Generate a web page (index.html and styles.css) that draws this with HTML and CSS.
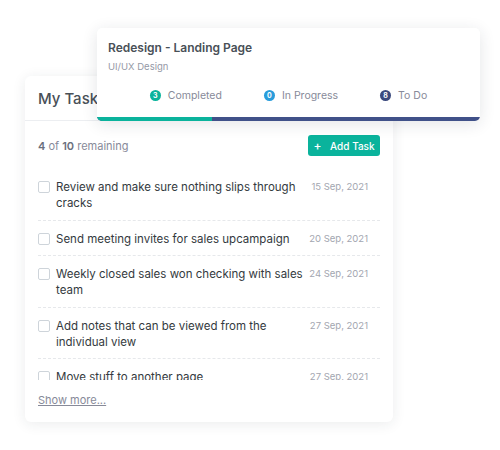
FILE: index.html
```html
<!DOCTYPE html>
<html lang="en">

<head>
    <meta charset="UTF-8">
    <meta name="viewport" content="width=device-width, initial-scale=1.0">
    <title>Tasks</title>
    <link rel="stylesheet" href="styles.css">
</head>

<body>
    <div class="scene">
        <div class="tasks-card">
            <div class="tasks-header">
                <h2>My Tasks</h2>
            </div>
            <div class="tasks-body">
                <div class="tasks-top">
                    <p class="remaining"><b>4</b> of <b>10</b> remaining</p>
                    <button class="add-btn"><span class="plus">+</span> Add Task</button>
                </div>
                <ul class="task-list">
                    <li class="task">
                        <span class="check"></span>
                        <span class="task-name">Review and make sure nothing slips through cracks</span>
                        <span class="task-date">15 Sep, 2021</span>
                    </li>
                    <li class="task">
                        <span class="check"></span>
                        <span class="task-name">Send meeting invites for sales upcampaign</span>
                        <span class="task-date">20 Sep, 2021</span>
                    </li>
                    <li class="task">
                        <span class="check"></span>
                        <span class="task-name">Weekly closed sales won checking with sales team</span>
                        <span class="task-date">24 Sep, 2021</span>
                    </li>
                    <li class="task">
                        <span class="check"></span>
                        <span class="task-name">Add notes that can be viewed from the individual view</span>
                        <span class="task-date">27 Sep, 2021</span>
                    </li>
                    <li class="task">
                        <span class="check"></span>
                        <span class="task-name">Move stuff to another page</span>
                        <span class="task-date">27 Sep, 2021</span>
                    </li>
                </ul>
                <a class="show-more" href="#">Show more...</a>
            </div>
        </div>

        <div class="project-card">
            <div class="project-info">
                <h3>Redesign - Landing Page</h3>
                <p>UI/UX Design</p>
            </div>
            <div class="project-stats">
                <div class="stat"><span class="dot done">3</span>Completed</div>
                <div class="stat"><span class="dot progress">0</span>In Progress</div>
                <div class="stat"><span class="dot todo">8</span>To Do</div>
            </div>
            <div class="bar">
                <div class="bar-fill" style="width: 30%"></div>
            </div>
        </div>
    </div>
</body>

</html>
```

FILE: styles.css
```css
* {
    box-sizing: border-box;
    font-family: "Inter", "Open Sans", sans-serif;
}

body {
    margin: 0;
    padding: 0;
    background: #fff;
}

.scene {
    position: relative;
    width: 500px;
    height: 450px;
    padding: 76px 0 0 25px;
}

.tasks-card {
    width: 368px;
    height: 346px;
    background: #fff;
    border-radius: 6px;
    box-shadow: 0 2px 14px rgba(30, 40, 60, 0.09);
    overflow: hidden;
}

.tasks-header {
    height: 45px;
    padding: 0 13px;
    display: flex;
    align-items: center;
    border-bottom: 1px solid #eceef1;
}

.tasks-header h2 {
    margin: 0;
    font-size: 15px;
    font-weight: 500;
    color: #495057;
}

.tasks-body {
    padding: 14px 13px 0;
}

.tasks-top {
    display: flex;
    justify-content: space-between;
    align-items: center;
}

.remaining {
    margin: 0;
    font-size: 11px;
    color: #878a99;
}

.remaining b {
    font-weight: 600;
    color: #6b6f7d;
}

.add-btn {
    width: 72px;
    height: 21px;
    padding: 0;
    border: none;
    border-radius: 3px;
    background: #0ab39c;
    color: #fff;
    font-size: 10px;
    font-weight: 500;
}

.plus {
    margin-right: 6px;
    font-size: 12px;
}

.task-list {
    list-style: none;
    margin: 13px 0 0;
    padding: 0;
    height: 211px;
    overflow: hidden;
}

.task {
    display: flex;
    align-items: flex-start;
    padding: 10px 0 8.5px;
    border-bottom: 1px dashed #e6e8eb;
}

.check {
    flex: none;
    width: 12px;
    height: 12px;
    margin-top: 2px;
    border: 1px solid #ced4da;
    border-radius: 2px;
}

.task-name {
    flex: 1;
    margin-left: 6px;
    font-size: 11.5px;
    line-height: 16px;
    color: #343a40;
}

.task-date {
    flex: none;
    width: 72px;
    padding-right: 12px;
    text-align: right;
    font-size: 9.5px;
    line-height: 15px;
    color: #a3a6b0;
}

.show-more {
    display: inline-block;
    margin-top: 13px;
    font-size: 11px;
    color: #878a99;
}

.project-card {
    position: absolute;
    left: 97px;
    top: 28px;
    width: 383px;
    height: 93px;
    background: #fff;
    border-radius: 5px;
    box-shadow: 0 3px 16px rgba(30, 40, 60, 0.12);
    overflow: hidden;
    display: flex;
    flex-direction: column;
}

.project-info {
    padding: 12px 11px 0;
}

.project-info h3 {
    margin: 0;
    font-size: 12px;
    font-weight: 600;
    color: #495057;
}

.project-info p {
    margin: 6px 0 0;
    font-size: 9.5px;
    color: #9599a6;
}

.project-stats {
    display: flex;
    justify-content: center;
    gap: 42px;
    margin-top: 17px;
}

.stat {
    display: flex;
    align-items: center;
    font-size: 10.5px;
    color: #878a99;
}

.dot {
    width: 11px;
    height: 11px;
    margin-right: 7px;
    border-radius: 50%;
    color: #fff;
    font-size: 7px;
    font-weight: 700;
    display: flex;
    align-items: center;
    justify-content: center;
}

.dot.done {
    background: #0ab39c;
}

.dot.progress {
    background: #299cdb;
}

.dot.todo {
    background: #3b4a7e;
}

.bar {
    margin-top: auto;
    height: 4px;
    background: #405189;
}

.bar-fill {
    height: 100%;
    background: #0ab39c;
}
```
